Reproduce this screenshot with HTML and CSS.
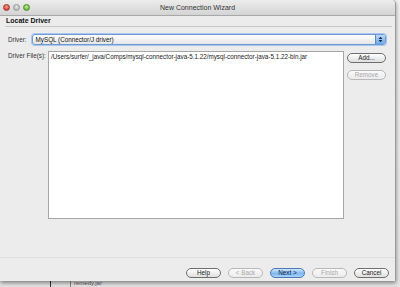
FILE: index.html
```html
<!DOCTYPE html>
<html lang="en">
<head>
    <meta charset="UTF-8">
    <title>New Connection Wizard</title>
    <link rel="stylesheet" href="styles.css">
</head>
<body>
    <div class="desktop">
        <!-- things behind the window -->
        <div class="bg-line"></div>
        <div class="bg-text">remedy.jar</div>

        <div class="window">
            <div class="titlebar">
                <div class="lights">
                    <span class="light red"></span>
                    <span class="light grey"></span>
                    <span class="light green"></span>
                </div>
                <div class="title">New Connection Wizard</div>
            </div>

            <div class="content">
                <div class="step">Locate Driver</div>

                <div class="row driver-row">
                    <label class="label">Driver:</label>
                    <div class="combo">
                        <span class="combo-text">MySQL (Connector/J driver)</span>
                        <span class="combo-arrows">
                            <svg width="5" height="7" viewBox="0 0 5 7">
                                <path d="M0.5 3 L2.5 0.8 L4.5 3 Z M0.5 4 L2.5 6.2 L4.5 4 Z" fill="#1a2a40"/>
                            </svg>
                        </span>
                    </div>
                </div>

                <div class="row files-row">
                    <label class="label">Driver File(s):</label>
                    <div class="listbox">
                        <div class="item">/Users/surfer/_java/Comps/mysql-connector-java-5.1.22/mysql-connector-java-5.1.22-bin.jar</div>
                    </div>
                    <div class="side">
                        <button class="btn">Add...</button>
                        <button class="btn" disabled>Remove</button>
                    </div>
                </div>
            </div>

            <div class="footer">
                <button class="btn">Help</button>
                <button class="btn" disabled>&lt; Back</button>
                <button class="btn primary">Next &gt;</button>
                <button class="btn" disabled>Finish</button>
                <button class="btn">Cancel</button>
            </div>
        </div>
    </div>
</body>
</html>
```

FILE: styles.css
```css
body {
    margin: 0;
    font-family: "Liberation Sans", Arial, sans-serif;
    font-size: 6.3px;
    color: #222;
}
.desktop {
    position: relative;
    width: 400px;
    height: 287px;
    overflow: hidden;
    background: linear-gradient(#f2f2f2, #e4e4e4);
}
.bg-line {
    position: absolute;
    left: 50px;
    top: 0;
    width: 1px;
    height: 287px;
    background: #333;
}
.bg-text {
    position: absolute;
    left: 70px;
    top: 280px;
    font-size: 6px;
    line-height: 7px;
    color: #666;
    border-left: 1px solid #888;
    padding-left: 3px;
}
.window {
    position: relative;
    width: 395px;
    height: 281px;
    display: flex;
    flex-direction: column;
    background: #ececec;
    border-right: 1px solid #9a9a9a;
    border-radius: 4px 4px 0 0;
    box-shadow: 0 2px 4px rgba(0, 0, 0, 0.45);
}
.titlebar {
    height: 16px;
    flex: none;
    display: flex;
    align-items: center;
    background: linear-gradient(#ececec, #d4d4d4);
    border-bottom: 1px solid #a8a8a8;
    border-radius: 4px 4px 0 0;
    box-sizing: border-box;
    position: relative;
}
.lights {
    display: flex;
    gap: 3px;
    padding-left: 3px;
}
.light {
    width: 7px;
    height: 7px;
    border-radius: 50%;
    box-sizing: border-box;
}
.red {
    background: radial-gradient(circle at 50% 35%, #f7a29a, #d9443a 70%);
    border: 1px solid #a5322b;
}
.grey {
    background: radial-gradient(circle at 50% 35%, #e8e8e8, #b8b8b8 70%);
    border: 1px solid #999;
}
.green {
    background: radial-gradient(circle at 50% 35%, #c6ec9c, #6cb83a 70%);
    border: 1px solid #4d8d2a;
}
.title {
    position: absolute;
    left: 0;
    right: 0;
    text-align: center;
    color: #333;
    font-size: 7px;
}
.content {
    flex: 1;
    padding: 0 3px 0 5px;
}
.step {
    font-weight: bold;
    font-size: 7px;
    height: 10px;
    line-height: 10px;
    padding: 0 1px;
    border-bottom: 1px solid #c6c6c6;
    color: #111;
}
.row {
    display: flex;
    padding-left: 3px;
}
.label {
    color: #333;
    white-space: nowrap;
}
.driver-row {
    margin-top: 7px;
    align-items: center;
    gap: 5px;
}
.combo {
    width: 354px;
    height: 11px;
    display: flex;
    justify-content: space-between;
    align-items: center;
    box-sizing: border-box;
    border: 1px solid #6e9ad6;
    border-radius: 3px;
    box-shadow: 0 0 0 1px #a9c6ee;
    background: linear-gradient(#ffffff, #e6e6e6);
}
.combo-text {
    padding-left: 3px;
    color: #111;
}
.combo-arrows {
    width: 9px;
    height: 9px;
    display: flex;
    align-items: center;
    justify-content: center;
    background: linear-gradient(#bcd9f7, #6aa8e8);
    border-left: 1px solid #5b89c4;
    border-radius: 0 2px 2px 0;
}
.files-row {
    margin-top: 6px;
}
.files-row .label {
    width: 40px;
    padding-top: 1px;
}
.listbox {
    width: 296px;
    height: 168px;
    box-sizing: border-box;
    background: #fff;
    border: 1px solid #a6a6a6;
    padding: 1px 2px;
}
.item {
    white-space: nowrap;
    color: #222;
}
.side {
    display: flex;
    flex-direction: column;
    gap: 7px;
    padding: 2px 0 0 3px;
}
.btn {
    font-family: "Liberation Sans", Arial, sans-serif;
    font-size: 6.3px;
    height: 10px;
    width: 39px;
    padding: 0;
    line-height: 8px;
    border: 1px solid #6f6f6f;
    border-radius: 5px;
    background: linear-gradient(#ffffff, #dedede);
    color: #222;
}
.btn:disabled {
    border-color: #b8b8b8;
    color: #a8a8a8;
    background: linear-gradient(#fafafa, #ebebeb);
}
.btn.primary {
    border-color: #4d79b5;
    background: linear-gradient(#cfe6fb, #7fb8f0 55%, #a8d2fa);
    color: #102040;
}
.footer {
    height: 24px;
    flex: none;
    box-sizing: border-box;
    display: flex;
    justify-content: flex-end;
    align-items: flex-start;
    gap: 7px;
    padding: 10px 6px 0 0;
    border-top: 1px solid #dedede;
}
.footer .btn {
    width: 35px;
}
```
